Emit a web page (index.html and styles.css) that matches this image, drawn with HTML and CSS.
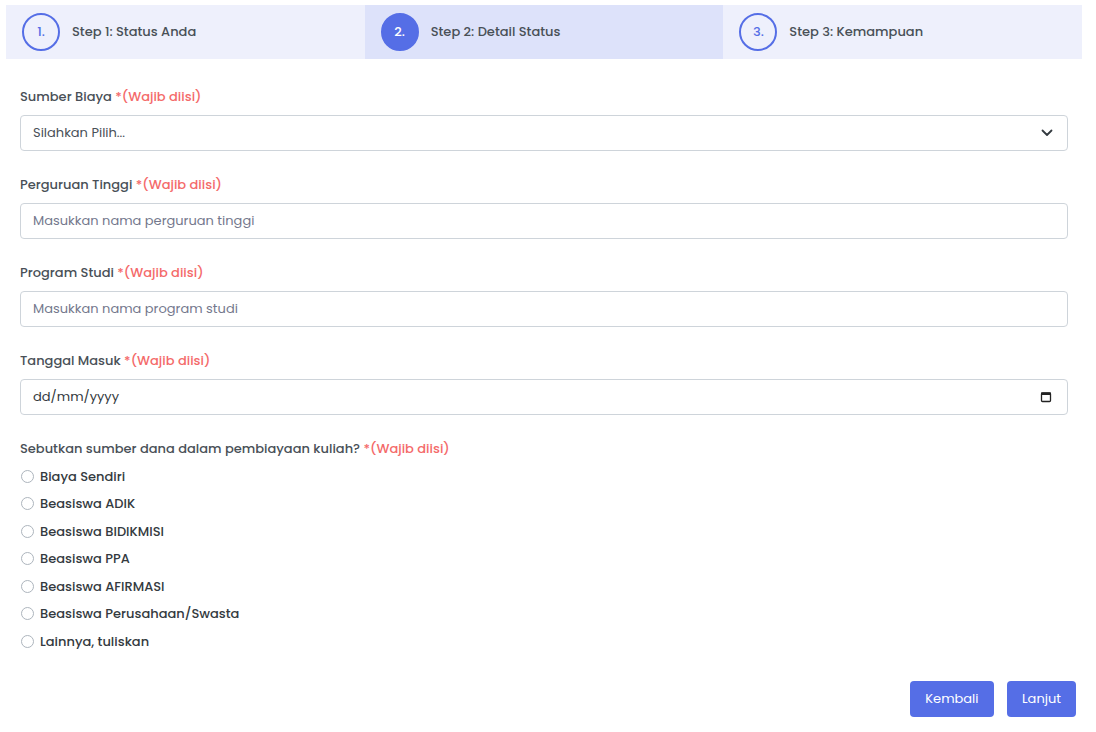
FILE: index.html
```html
<!DOCTYPE html>
<html lang="id">

<head>
    <meta charset="UTF-8">
    <meta name="viewport" content="width=device-width, initial-scale=1.0">
    <title>Form Wizard - Detail Status</title>
    <link rel="stylesheet" href="styles.css">
</head>

<body>
    <div class="wizard">
        <!-- langkah-langkah -->
        <ul class="steps">
            <li><a href="#"><span class="number">1.</span> Step 1: Status Anda</a></li>
            <li class="current"><a href="#"><span class="number">2.</span> Step 2: Detail Status</a></li>
            <li><a href="#"><span class="number">3.</span> Step 3: Kemampuan</a></li>
        </ul>

        <!-- isi form -->
        <form class="content">
            <div class="form-group">
                <label>Sumber Biaya <span class="req">*(Wajib diisi)</span></label>
                <div class="input-wrap">
                    <select class="form-control">
                        <option>Silahkan Pilih...</option>
                    </select>
                    <svg class="chevron" width="12" height="8" viewBox="0 0 12 8">
                        <path d="M1.5 1.5 L6 6 L10.5 1.5" fill="none" stroke="#343a40" stroke-width="1.8" stroke-linecap="round" stroke-linejoin="round" />
                    </svg>
                </div>
            </div>

            <div class="form-group">
                <label>Perguruan Tinggi <span class="req">*(Wajib diisi)</span></label>
                <input type="text" class="form-control" placeholder="Masukkan nama perguruan tinggi">
            </div>

            <div class="form-group">
                <label>Program Studi <span class="req">*(Wajib diisi)</span></label>
                <input type="text" class="form-control" placeholder="Masukkan nama program studi">
            </div>

            <div class="form-group">
                <label>Tanggal Masuk <span class="req">*(Wajib diisi)</span></label>
                <div class="input-wrap">
                    <input type="text" class="form-control date" placeholder="dd/mm/yyyy">
                    <svg class="calendar" width="12" height="12" viewBox="0 0 12 12">
                        <rect x="1.5" y="2" width="9" height="8.5" rx="1" fill="none" stroke="#222" stroke-width="1.3" />
                        <rect x="1" y="1.5" width="10" height="2.5" fill="#222" />
                    </svg>
                </div>
            </div>

            <div class="form-group radios">
                <label>Sebutkan sumber dana dalam pembiayaan kuliah? <span class="req">*(Wajib diisi)</span></label>
                <div class="radio-list">
                    <label class="form-check"><input type="radio" name="dana"> Biaya Sendiri</label>
                    <label class="form-check"><input type="radio" name="dana"> Beasiswa ADIK</label>
                    <label class="form-check"><input type="radio" name="dana"> Beasiswa BIDIKMISI</label>
                    <label class="form-check"><input type="radio" name="dana"> Beasiswa PPA</label>
                    <label class="form-check"><input type="radio" name="dana"> Beasiswa AFIRMASI</label>
                    <label class="form-check"><input type="radio" name="dana"> Beasiswa Perusahaan/Swasta</label>
                    <label class="form-check"><input type="radio" name="dana"> Lainnya, tuliskan</label>
                </div>
            </div>
        </form>

        <!-- tombol aksi -->
        <ul class="actions">
            <li><a href="#">Kembali</a></li>
            <li><a href="#">Lanjut</a></li>
        </ul>
    </div>
</body>

</html>
```

FILE: styles.css
```css
/* dasar */
body {
    margin: 0;
    background-color: #fff;
    font-family: "Poppins", "Open Sans", sans-serif;
    font-size: 13px;
    color: #495057;
}

.wizard {
    margin: 5px 14px 0 6px;
}

/* langkah */
.steps {
    display: flex;
    list-style: none;
    margin: 0;
    padding: 0;
}

.steps li {
    flex: 1;
}

.steps li a {
    display: flex;
    align-items: center;
    padding: 8px 16px;
    background-color: #eef0fc;
    color: #495057;
    font-weight: 500;
    text-decoration: none;
}

.steps li.current a {
    background-color: #dde2fa;
}

.steps .number {
    display: inline-block;
    width: 38px;
    height: 38px;
    line-height: 34px;
    box-sizing: border-box;
    border: 2px solid #556ee6;
    border-radius: 50%;
    color: #556ee6;
    text-align: center;
    margin-right: 12px;
}

.steps li.current .number {
    background-color: #556ee6;
    color: #fff;
}

/* isi form */
.content {
    padding: 28px 14px 6px;
}

.form-group {
    margin-bottom: 24px;
}

.form-group > label {
    display: block;
    margin-bottom: 8px;
    line-height: 19.5px;
    font-weight: 500;
}

.req {
    color: #f46a6a;
}

.form-control {
    display: block;
    width: 100%;
    box-sizing: border-box;
    height: 36.5px;
    padding: 7.5px 12px;
    font-family: inherit;
    font-size: 13px;
    color: #495057;
    background-color: #fff;
    border: 1px solid #ced4da;
    border-radius: 4px;
}

.form-control::placeholder {
    color: #74788d;
}

.form-control.date::placeholder {
    color: #343a40;
}

.input-wrap {
    position: relative;
}

.input-wrap select {
    appearance: none;
}

.chevron {
    position: absolute;
    right: 15px;
    top: 14px;
    pointer-events: none;
}

.calendar {
    position: absolute;
    right: 16px;
    top: 12px;
    pointer-events: none;
}

/* pilihan radio */
.form-check {
    display: flex;
    align-items: center;
    margin-bottom: 8px;
    line-height: 19.5px;
    font-weight: 500;
    color: #343a40;
}

.form-check input {
    appearance: none;
    width: 13px;
    height: 13px;
    margin: 0 6px 0 1px;
    border: 1px solid #adb5bd;
    border-radius: 50%;
    background-color: #fff;
}

/* tombol */
.actions {
    list-style: none;
    margin: 0;
    padding: 0 1px 0 0;
    text-align: right;
}

.actions li {
    display: inline-block;
    margin: 0 5px;
}

.actions li a {
    display: block;
    padding: 8px 15px;
    background-color: #556ee6;
    color: #fff;
    border-radius: 4px;
    text-decoration: none;
    line-height: 19.5px;
}
```
